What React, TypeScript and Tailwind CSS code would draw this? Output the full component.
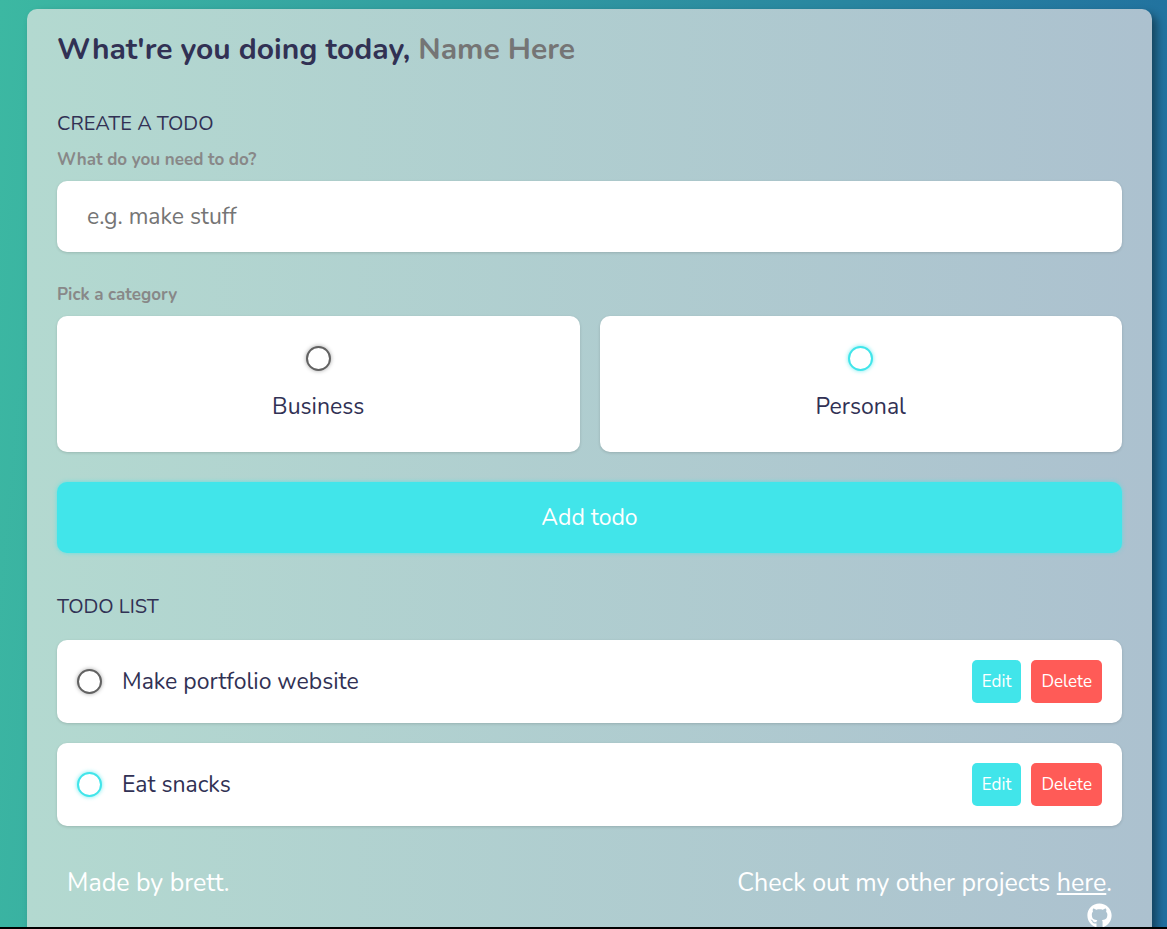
import { useState, type FormEvent } from "react";
import { FaGithub } from "react-icons/fa";
import clsx from "clsx";

type Category = "business" | "personal";

interface Todo {
  id: number;
  content: string;
  category: Category;
  done: boolean;
}

const INITIAL_TODOS: Todo[] = [
  { id: 1, content: "Make portfolio website", category: "business", done: false },
  { id: 2, content: "Eat snacks", category: "personal", done: false },
];

const CATEGORIES: { label: string; value: Category }[] = [
  { label: "Business", value: "business" },
  { label: "Personal", value: "personal" },
];

const bubble = (category: Category) =>
  clsx(
    "size-[25px] shrink-0 appearance-none rounded-full border-2 bg-white bg-clip-content p-1 cursor-pointer",
    category === "business"
      ? "border-[#626262] shadow-[0_0_4px_rgba(0,0,0,0.35)] checked:bg-[#626262]"
      : "border-[#41e5ea] shadow-[0_0_4px_rgba(65,229,234,0.75)] checked:bg-[#41e5ea]"
  );

export default function App() {
  const [name, setName] = useState("");
  const [content, setContent] = useState("");
  const [category, setCategory] = useState<Category | null>(null);
  const [todos, setTodos] = useState(INITIAL_TODOS);

  const addTodo = (e: FormEvent) => {
    e.preventDefault();
    if (!content.trim() || !category) return;
    setTodos([{ id: Date.now(), content, category, done: false }, ...todos]);
    setContent("");
    setCategory(null);
  };

  const updateTodo = (id: number, changes: Partial<Todo>) =>
    setTodos(todos.map((t) => (t.id === id ? { ...t, ...changes } : t)));

  const editTodo = (todo: Todo) => {
    const next = window.prompt("Edit todo", todo.content);
    if (next) updateTodo(todo.id, { content: next });
  };

  return (
    <div className="h-screen overflow-hidden border-b-2 border-black bg-[linear-gradient(95deg,#3cb8a2,#206e9f)] pt-[9px] pr-[15px] pl-[27px] font-['Nunito','Lato',sans-serif] text-[#313154]">
      <main className="min-h-full rounded-[10px] bg-[linear-gradient(to_right,#b3d9d0,#acc1cf)] px-[30px] pt-5 pb-10 shadow-[5px_5px_8px_rgba(0,0,0,0.4)]">
        {/* Greeting */}
        <h2 className="flex gap-2 text-[30px] leading-[41px] font-bold">
          <label htmlFor="name" className="whitespace-nowrap">
            What're you doing today,
          </label>
          <input
            id="name"
            type="text"
            placeholder="Name Here"
            value={name}
            onChange={(e) => setName(e.target.value)}
            className="min-w-0 flex-1 bg-transparent outline-none placeholder:text-[#757575]"
          />
        </h2>

        {/* New todo */}
        <section className="mt-10">
          <h3 className="text-[20px] leading-[27px]">CREATE A TODO</h3>
          <form onSubmit={addTodo}>
            <label
              htmlFor="content"
              className="mt-[11px] mb-[9px] block text-[17px] leading-6 font-bold text-[#888]"
            >
              What do you need to do?
            </label>
            <input
              id="content"
              type="text"
              placeholder="e.g. make stuff"
              value={content}
              onChange={(e) => setContent(e.target.value)}
              className="block w-full rounded-[10px] bg-white px-[30px] py-5 text-[23px] leading-[31px] shadow-[0_1px_3px_rgba(0,0,0,0.15)] outline-none placeholder:text-[#757575]"
            />

            <fieldset className="mt-[31px]">
              <legend className="mb-[9px] text-[17px] leading-6 font-bold text-[#888]">
                Pick a category
              </legend>
              <div className="grid grid-cols-2 gap-5">
                {CATEGORIES.map((c) => (
                  <label
                    key={c.value}
                    className="flex cursor-pointer flex-col items-center gap-5 rounded-[10px] bg-white py-[30px] text-[23px] leading-[31px] shadow-[0_1px_3px_rgba(0,0,0,0.15)]"
                  >
                    <input
                      type="radio"
                      name="category"
                      value={c.value}
                      checked={category === c.value}
                      onChange={() => setCategory(c.value)}
                      className={bubble(c.value)}
                    />
                    {c.label}
                  </label>
                ))}
              </div>
            </fieldset>

            <button
              type="submit"
              className="mt-[30px] block w-full cursor-pointer rounded-[10px] bg-[#41e5ea] py-5 text-[23px] leading-[31px] text-white shadow-[0_0_4px_rgba(65,229,234,0.75)]"
            >
              Add todo
            </button>
          </form>
        </section>

        {/* Todo list */}
        <section className="mt-10">
          <h3 className="text-[20px] leading-[27px]">TODO LIST</h3>
          <ul className="mt-5 flex flex-col gap-5">
            {todos.map((todo) => (
              <li
                key={todo.id}
                className="flex items-center gap-5 rounded-[10px] bg-white p-5 shadow-[0_1px_3px_rgba(0,0,0,0.15)]"
              >
                <label className="flex flex-1 cursor-pointer items-center gap-5 text-[23px] leading-[31px]">
                  <input
                    type="checkbox"
                    checked={todo.done}
                    onChange={(e) => updateTodo(todo.id, { done: e.target.checked })}
                    className={bubble(todo.category)}
                  />
                  <span className={clsx(todo.done && "text-[#888] line-through")}>{todo.content}</span>
                </label>
                <div className="flex gap-[10px] text-[17px] leading-[23px] text-white">
                  <button
                    type="button"
                    onClick={() => editTodo(todo)}
                    className="cursor-pointer rounded-[5px] bg-[#41e5ea] p-[10px]"
                  >
                    Edit
                  </button>
                  <button
                    type="button"
                    onClick={() => setTodos(todos.filter((t) => t.id !== todo.id))}
                    className="cursor-pointer rounded-[5px] bg-[#ff5b57] p-[10px]"
                  >
                    Delete
                  </button>
                </div>
              </li>
            ))}
          </ul>
        </section>

        <footer className="mt-10 flex justify-between px-[10px] text-[25px] leading-[34px] text-white">
          <p>Made by brett.</p>
          <div className="flex flex-col items-end gap-[3px]">
            <p>
              Check out my other projects{" "}
              <a href="#projects" className="underline">
                here
              </a>
              .
            </p>
            <a href="#github" aria-label="GitHub">
              <FaGithub className="size-[25px]" />
            </a>
          </div>
        </footer>
      </main>
    </div>
  );
}
